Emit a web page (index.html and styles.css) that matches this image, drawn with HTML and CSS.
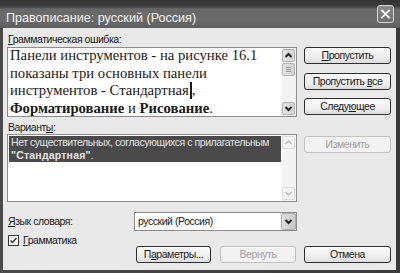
FILE: index.html
```html
<!DOCTYPE html>
<html lang="ru">
<head>
<meta charset="utf-8">
<title>Правописание</title>
<link rel="stylesheet" href="styles.css">
</head>
<body>
<div class="window">
  <div class="titlebar">
    <span class="title">Правописание: русский (Россия)</span>
    <div class="close">
      <svg width="17" height="18" viewBox="0 0 17 18"><path d="M4.5 5 L12.5 13 M12.5 5 L4.5 13" stroke="#fff" stroke-width="2" stroke-linecap="square"/></svg>
    </div>
  </div>
  <div class="frame">
    <div class="content">
      <div class="label"><u>Г</u>рамматическая ошибка:</div>
      <div class="row">
        <div class="textbox">
          <div class="text">Панели инструментов - на рисунке 16.1<br>показаны три основных панели<br>инструментов - Стандартная<span class="caret"></span>,<br><b>Форматирование</b> и <b>Рисование</b>.</div>
          <div class="scrollbar">
            <div class="sbtn"><svg width="11" height="11" viewBox="0 0 11 11"><path d="M2.5 7 L5.5 4 L8.5 7" fill="none" stroke="#222" stroke-width="2"/></svg></div>
            <div class="thumb"><svg width="11" height="11" viewBox="0 0 11 11"><path d="M3 3.5h5M3 5.5h5M3 7.5h5" stroke="#999" stroke-width="1"/></svg></div>
            <div class="track"></div>
            <div class="sbtn"><svg width="11" height="11" viewBox="0 0 11 11"><path d="M2.5 4 L5.5 7 L8.5 4" fill="none" stroke="#222" stroke-width="2"/></svg></div>
          </div>
        </div>
        <div class="side">
          <div class="btn"><u>П</u>ропустить</div>
          <div class="btn">Пропустить <u>в</u>се</div>
          <div class="btn">Следу<u>ю</u>щее</div>
        </div>
      </div>
      <div class="label label2">Вариант<u>ы</u>:</div>
      <div class="row">
        <div class="listbox">
          <div class="list">
            <div class="selected">Нет существительных, согласующихся с прилагательным<br><b>"Стандартная"</b>.</div>
          </div>
          <div class="scrollbar disabled">
            <div class="sbtn"><svg width="11" height="11" viewBox="0 0 11 11"><path d="M2.5 7 L5.5 4 L8.5 7" fill="none" stroke="#bbb" stroke-width="1.5"/></svg></div>
            <div class="track"></div>
            <div class="sbtn"><svg width="11" height="11" viewBox="0 0 11 11"><path d="M2.5 4 L5.5 7 L8.5 4" fill="none" stroke="#bbb" stroke-width="1.5"/></svg></div>
          </div>
        </div>
        <div class="side side2">
          <div class="btn off">Изменить</div>
        </div>
      </div>
      <div class="lang">
        <div class="langlabel"><u>Я</u>зык словаря:</div>
        <div class="combo">
          <span class="combotext">русский (Россия)</span>
          <div class="drop"><svg width="11" height="11" viewBox="0 0 11 11"><path d="M2.5 4 L5.5 7 L8.5 4" fill="none" stroke="#222" stroke-width="2"/></svg></div>
        </div>
      </div>
      <div class="check">
        <div class="cbox"><svg width="9" height="9" viewBox="0 0 9 9"><path d="M1.5 4.5 L3.5 6.5 L7.5 2" fill="none" stroke="#333" stroke-width="1.5"/></svg></div>
        <span><u>Г</u>рамматика</span>
      </div>
      <div class="buttons">
        <div class="btn b1">П<u>а</u>раметры...</div>
        <div class="btn b2 off">Вернуть</div>
        <div class="btn b3">Отмена</div>
      </div>
    </div>
  </div>
</div>
</body>
</html>
```

FILE: styles.css
```css
* { box-sizing: border-box; margin: 0; padding: 0; }
html, body { width: 400px; height: 273px; overflow: hidden; background: #3a3a3a; }
body { font-family: "Liberation Sans", Arial, sans-serif; font-size: 10.5px; letter-spacing: -0.45px; color: #1a1a1a; }
u { text-decoration: underline; text-underline-offset: 1px; }

.window { display: flex; flex-direction: column; width: 400px; height: 273px; }

.titlebar {
  height: 28px;
  display: flex;
  align-items: flex-start;
  background: linear-gradient(#353535 0, #3a3a3a 6px, #686868 9px, #6a6a6a 20px, #5e5e5e 28px);
}
.title {
  padding: 11px 0 0 6px;
  font-size: 12.6px;
  letter-spacing: 0;
  line-height: 14px;
  color: #f2f2f2;
}
.close {
  margin: 5px 6px 0 auto;
  width: 17px;
  height: 18px;
  border: 1px solid #d8d8d8;
  border-radius: 3px;
  background: linear-gradient(#8a8a8a, #6e6e6e);
  display: flex;
  align-items: center;
  justify-content: center;
}
.close svg { display: block; }

.frame { flex: 1; padding: 0 4px 3px 3px; background: linear-gradient(90deg, #4a4a4a, #3a3a3a); display: flex; }
.content {
  flex: 1;
  background: #e9e9e9;
  padding: 5px 5px 0 4px;
  display: flex;
  flex-direction: column;
}

.label { line-height: 13px; height: 14px; padding-left: 1px; }
.label2 { margin-top: 4px; height: 13px; }

.row { display: flex; gap: 7px; }

.textbox, .listbox {
  width: 290px;
  background: #fff;
  border: 1px solid #8c8c8c;
  display: flex;
}
.textbox { height: 70px; }
.listbox { height: 68px; }

.text {
  flex: 1;
  padding: 0 0 0 2px;
  font-family: "Liberation Serif", "Times New Roman", serif;
  font-size: 14.7px;
  letter-spacing: 0;
  line-height: 17.5px;
  color: #1a1a1a;
  white-space: nowrap;
  margin-top: -1px;
}
.caret {
  display: inline-block;
  width: 2px;
  height: 17px;
  background: #1a1a1a;
  vertical-align: -4px;
  margin-left: 1px;
}

.scrollbar {
  width: 14px;
  display: flex;
  flex-direction: column;
  background: #f3f3f3;
  padding: 1px 1px 1px 0;
}
.sbtn, .thumb {
  height: 13px;
  border: 1px solid #b4b4b4;
  border-radius: 2px;
  background: linear-gradient(90deg, #e4e4e4, #d2d2d2);
  display: flex;
  align-items: center;
  justify-content: center;
}
.thumb { margin-top: 1px; }
.track { flex: 1; }
.disabled .sbtn { background: #f4f4f4; border-color: #dcdcdc; }
.sbtn svg, .thumb svg { display: block; }

.list { flex: 1; padding: 1px 1px 0 1px; overflow: hidden; }
.selected {
  background: #4a4a4a;
  color: #e4e4e4;
  line-height: 13px;
  padding-left: 2px;
  white-space: nowrap;
}
.selected b { letter-spacing: 0.2px; }

.side { width: 87px; display: flex; flex-direction: column; gap: 8.5px; }
.side2 { padding-top: 2px; }

.btn {
  height: 17px;
  border: 1px solid #2e2e2e;
  border-radius: 3px;
  background: linear-gradient(#fbfbfb, #ececec 70%, #dcdcdc);
  display: flex;
  align-items: center;
  justify-content: center;
  line-height: 13px;
  color: #1a1a1a;
  white-space: pre;
}
.btn.off { border-color: #c2c2c2; color: #a0a0a0; background: #f2f2f2; }

.lang { display: flex; align-items: center; margin-top: 10px; height: 19px; }
.langlabel { width: 127px; padding-left: 1px; line-height: 13px; }
.combo {
  width: 163px;
  height: 19px;
  background: #fff;
  border: 1px solid #8c8c8c;
  display: flex;
  align-items: center;
}
.combotext { flex: 1; padding-left: 3px; line-height: 13px; }
.drop {
  width: 15px;
  height: 17px;
  border: 1px solid #b0b0b0;
  border-radius: 2px;
  background: linear-gradient(90deg, #dedede, #c8c8c8);
  display: flex;
  align-items: center;
  justify-content: center;
}
.drop svg { display: block; }

.check { display: flex; align-items: center; gap: 4px; margin-top: 4px; height: 11px; padding-left: 1px; line-height: 13px; }
.cbox {
  width: 11px;
  height: 11px;
  border: 1px solid #3a3a3a;
  background: #fff;
  display: flex;
  align-items: center;
  justify-content: center;
}
.cbox svg { display: block; }

.buttons { display: flex; justify-content: flex-end; }
.b1 { width: 75px; }
.b2 { width: 76px; margin-left: 9px; }
.b3 { width: 87px; margin-left: 8px; }
```
